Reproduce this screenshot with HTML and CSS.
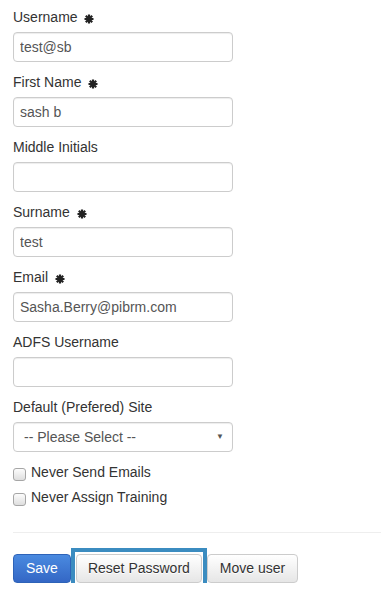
FILE: index.html
```html
<!DOCTYPE html>
<html lang="en">
<head>
  <meta charset="UTF-8">
  <title>Edit User</title>
  <link rel="stylesheet" href="styles.css">
</head>
<body>
  <div class="container">
    <form class="user-form">
      <!-- Account details -->
      <div class="form-group">
        <label>Username <svg class="req" viewBox="0 0 10 10"><path d="M5 0.5V9.5M0.5 5H9.5M1.8 1.8L8.2 8.2M8.2 1.8L1.8 8.2"/></svg></label>
        <input type="text" class="form-control" value="test@sb">
      </div>
      <div class="form-group">
        <label>First Name <svg class="req" viewBox="0 0 10 10"><path d="M5 0.5V9.5M0.5 5H9.5M1.8 1.8L8.2 8.2M8.2 1.8L1.8 8.2"/></svg></label>
        <input type="text" class="form-control" value="sash b">
      </div>
      <div class="form-group">
        <label>Middle Initials</label>
        <input type="text" class="form-control" value="">
      </div>
      <div class="form-group">
        <label>Surname <svg class="req" viewBox="0 0 10 10"><path d="M5 0.5V9.5M0.5 5H9.5M1.8 1.8L8.2 8.2M8.2 1.8L1.8 8.2"/></svg></label>
        <input type="text" class="form-control" value="test">
      </div>
      <div class="form-group">
        <label>Email <svg class="req" viewBox="0 0 10 10"><path d="M5 0.5V9.5M0.5 5H9.5M1.8 1.8L8.2 8.2M8.2 1.8L1.8 8.2"/></svg></label>
        <input type="text" class="form-control" value="Sasha.Berry@pibrm.com">
      </div>
      <div class="form-group">
        <label>ADFS Username</label>
        <input type="text" class="form-control" value="">
      </div>
      <div class="form-group">
        <label>Default (Prefered) Site</label>
        <div class="select-wrap">
          <select class="form-control">
            <option>-- Please Select --</option>
          </select>
          <span class="caret">&#9660;</span>
        </div>
      </div>

      <div class="checkbox"><label><input type="checkbox"> Never Send Emails</label></div>
      <div class="checkbox"><label><input type="checkbox"> Never Assign Training</label></div>
    </form>

    <hr>

    <div class="actions">
      <button class="btn btn-primary">Save</button>
      <span class="focus-frame"><button class="btn btn-default">Reset Password</button></span>
      <button class="btn btn-default">Move user</button>
    </div>
  </div>
</body>
</html>
```

FILE: styles.css
```css
body {
  margin: 0;
  font-family: "Liberation Sans", Arial, sans-serif;
  font-size: 14px;
  line-height: 20px;
  color: #333;
  background: #fff;
}
.container {
  padding: 7px 0 0 13px;
}
.form-group {
  margin-bottom: 10px;
}
.form-group > label {
  display: block;
  height: 20px;
  margin-bottom: 5px;
}
.req {
  width: 10px;
  height: 10px;
  margin-left: 3px;
  vertical-align: -2px;
  stroke: #222;
  stroke-width: 2.2;
}
.form-control {
  display: block;
  box-sizing: border-box;
  width: 220px;
  height: 30px;
  padding: 5px 6px;
  font-family: inherit;
  font-size: 14px;
  color: #555;
  background: #fff;
  border: 1px solid #ccc;
  border-radius: 4px;
  box-shadow: inset 0 1px 1px rgba(0, 0, 0, 0.075);
}
.select-wrap {
  position: relative;
  width: 220px;
}
select.form-control {
  appearance: none;
  -webkit-appearance: none;
  padding-left: 10px;
}
.caret {
  position: absolute;
  right: 9px;
  top: 5px;
  font-size: 8px;
  color: #555;
  pointer-events: none;
}
.checkbox {
  height: 20px;
  margin-bottom: 5px;
}
.checkbox label {
  display: flex;
  align-items: center;
}
.checkbox input {
  appearance: none;
  -webkit-appearance: none;
  box-sizing: border-box;
  width: 13px;
  height: 13px;
  margin: 4px 5px 0 0;
  border: 1px solid #a6a6a6;
  border-radius: 3px;
  background: linear-gradient(to bottom, #fcfcfc 0, #dedede 100%);
}
hr {
  border: 0;
  border-top: 1px solid #eee;
  margin: 25px 0 21px;
}
.actions {
  display: flex;
  align-items: flex-start;
  gap: 5px;
}
.btn {
  box-sizing: border-box;
  height: 29px;
  font-family: inherit;
  font-size: 14px;
  line-height: 19px;
  padding: 4px 12px;
  border-radius: 4px;
  border: 1px solid #ccc;
  cursor: pointer;
}
.btn-primary {
  color: #fff;
  border-color: #2e63b8;
  background: linear-gradient(to bottom, #4a8ae0 0, #3467c5 100%);
}
.btn-default {
  color: #333;
  background: linear-gradient(to bottom, #fff 0, #e6e6e6 100%);
  text-shadow: 0 1px 0 #fff;
}
.focus-frame {
  display: flex;
  margin: -6px -5px -7px;
  padding: 2px 1px 3px;
  border: 4px solid #3b8cc0;
}
.focus-frame .btn {
  padding: 4px 11px;
}
```
